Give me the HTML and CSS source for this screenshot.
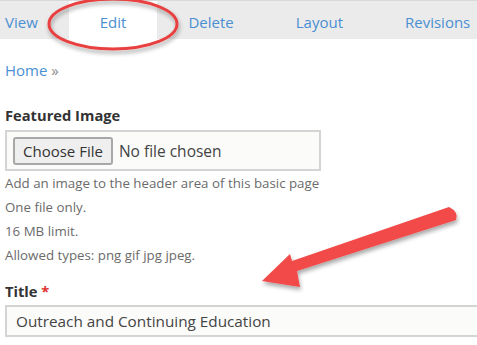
FILE: index.html
```html
<!DOCTYPE html>
<html>

<head>
    <meta charset="utf-8">
    <title>Edit Basic page</title>
    <link rel="stylesheet" href="styles.css">
</head>

<body>
    <ul class="tabs">
        <li><a href="#">View</a></li>
        <li class="active"><a href="#">Edit</a></li>
        <li><a href="#">Delete</a></li>
        <li><a href="#">Layout</a></li>
        <li><a href="#">Revisions</a></li>
    </ul>

    <div class="content">
        <div class="breadcrumb"><a href="#">Home</a> <span class="sep">&raquo;</span></div>

        <div class="form-item">
            <label class="label">Featured Image</label>
            <div class="file-box">
                <span class="file-button">Choose File</span>
                <span class="file-name">No file chosen</span>
            </div>
            <div class="description">
                <p>Add an image to the header area of this basic page</p>
                <p>One file only.</p>
                <p>16 MB limit.</p>
                <p>Allowed types: png gif jpg jpeg.</p>
            </div>
        </div>

        <div class="form-item title-item">
            <label class="label">Title <span class="required">*</span></label>
            <div class="text-input">Outreach and Continuing Education</div>
        </div>
    </div>

    <!-- annotation drawn over the screenshot -->
    <svg class="markup" width="477" height="345" viewBox="0 0 477 345">
        <defs>
            <filter id="shadow" x="-20%" y="-20%" width="140%" height="160%">
                <feDropShadow dx="1" dy="3" stdDeviation="2" flood-color="#000" flood-opacity="0.35" />
            </filter>
        </defs>
        <ellipse cx="113" cy="24" rx="64" ry="25" fill="none" stroke="#e8403f" stroke-width="3" filter="url(#shadow)" />
        <g filter="url(#shadow)" fill="#f24848">
            <path d="M449 207 Q459 212 456 220 L297 271 L300 287 L262 281 L290 254 L292 261 Z" />
        </g>
    </svg>
</body>

</html>
```

FILE: styles.css
```css
* {
    box-sizing: border-box;
    margin: 0;
    padding: 0;
}

body {
    background-color: #fff;
    color: #333;
    font-family: "Open Sans", "DejaVu Sans", sans-serif;
    overflow: hidden;
    width: 477px;
    height: 345px;
}

a {
    color: #4a8fd2;
    text-decoration: none;
}

.tabs {
    background-color: #ebebeb;
    border-top: 1px solid #d9d9d9;
    display: flex;
    height: 39px;
    list-style: none;
    margin-left: -26px;
    white-space: nowrap;
}

.tabs li a {
    display: block;
    font-size: 15px;
    line-height: 38px;
    padding: 2px 31px 0;
}

.tabs li.active {
    background-color: #fff;
}

.content {
    padding: 0 5px;
}

.breadcrumb {
    font-size: 15px;
    margin-top: 21px;
}

.breadcrumb .sep {
    color: #8a8a8a;
}

.form-item {
    margin-top: 25px;
}

.title-item {
    margin-top: 14px;
}

.label {
    display: block;
    font-size: 14.7px;
    font-weight: bold;
    line-height: 20px;
}

.required {
    color: #e0302f;
}

.file-box {
    align-items: center;
    background-color: #fbfbfa;
    border: 2px solid #d4d4d4;
    display: flex;
    height: 41px;
    margin-top: 5px;
    padding: 0 6px;
    width: 316px;
}

.file-button {
    background-color: #efefef;
    border: 2px solid #a8a8a8;
    border-radius: 3px;
    color: #333;
    font-size: 15px;
    line-height: 24px;
    padding: 0 8px;
}

.file-name {
    color: #444;
    font-size: 15.5px;
    margin-left: 6px;
}

.description {
    color: #6b6b6b;
    font-size: 13.3px;
}

.description p {
    line-height: 24px;
}

.text-input {
    background-color: #fbfbfa;
    border: 2px solid #d4d4d4;
    color: #444;
    font-size: 15.3px;
    height: 32px;
    line-height: 28px;
    margin-top: 4px;
    padding: 0 9px;
    width: 520px;
}

.markup {
    left: 0;
    pointer-events: none;
    position: absolute;
    top: 0;
}
```
